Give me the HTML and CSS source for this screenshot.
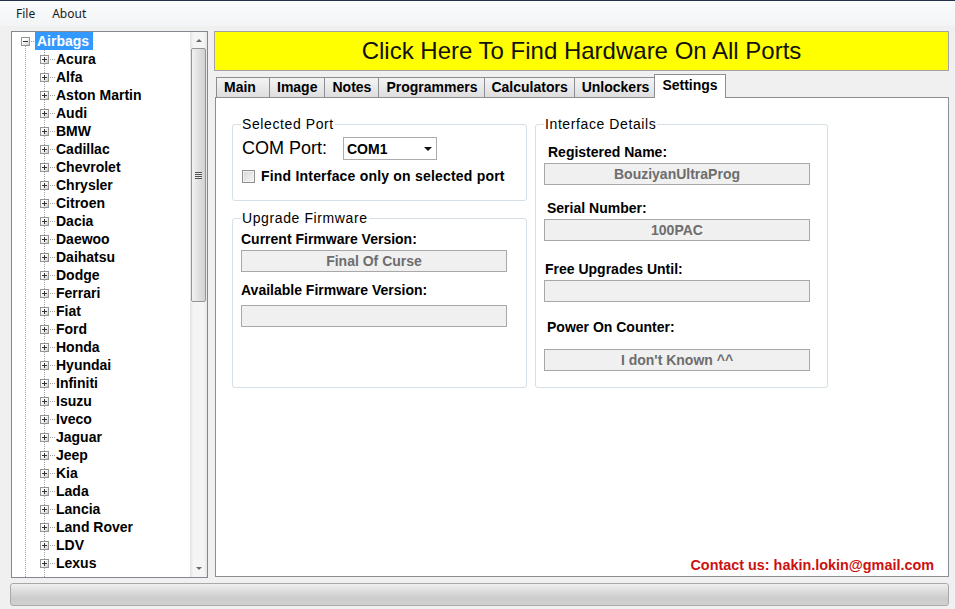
FILE: index.html
```html
<!DOCTYPE html>
<html lang="en">
<head>
  <meta charset="UTF-8">
  <meta name="viewport" content="width=device-width, initial-scale=1.0">
  <title>UltraProg</title>
  <link rel="stylesheet" href="styles.css">
</head>
<body>
  <div class="menubar">
    <span class="menu-item">File</span>
    <span class="menu-item">About</span>
  </div>

  <div class="workspace">
    <!-- car makes tree -->
    <div class="tree">
      <div class="tree-body">
        <div class="node root"><span class="exp open"></span><span class="dots"></span><span class="label selected">Airbags</span></div>
        <ul class="children">
          <li class="node"><span class="exp"></span><span class="dots"></span>Acura</li>
          <li class="node"><span class="exp"></span><span class="dots"></span>Alfa</li>
          <li class="node"><span class="exp"></span><span class="dots"></span>Aston Martin</li>
          <li class="node"><span class="exp"></span><span class="dots"></span>Audi</li>
          <li class="node"><span class="exp"></span><span class="dots"></span>BMW</li>
          <li class="node"><span class="exp"></span><span class="dots"></span>Cadillac</li>
          <li class="node"><span class="exp"></span><span class="dots"></span>Chevrolet</li>
          <li class="node"><span class="exp"></span><span class="dots"></span>Chrysler</li>
          <li class="node"><span class="exp"></span><span class="dots"></span>Citroen</li>
          <li class="node"><span class="exp"></span><span class="dots"></span>Dacia</li>
          <li class="node"><span class="exp"></span><span class="dots"></span>Daewoo</li>
          <li class="node"><span class="exp"></span><span class="dots"></span>Daihatsu</li>
          <li class="node"><span class="exp"></span><span class="dots"></span>Dodge</li>
          <li class="node"><span class="exp"></span><span class="dots"></span>Ferrari</li>
          <li class="node"><span class="exp"></span><span class="dots"></span>Fiat</li>
          <li class="node"><span class="exp"></span><span class="dots"></span>Ford</li>
          <li class="node"><span class="exp"></span><span class="dots"></span>Honda</li>
          <li class="node"><span class="exp"></span><span class="dots"></span>Hyundai</li>
          <li class="node"><span class="exp"></span><span class="dots"></span>Infiniti</li>
          <li class="node"><span class="exp"></span><span class="dots"></span>Isuzu</li>
          <li class="node"><span class="exp"></span><span class="dots"></span>Iveco</li>
          <li class="node"><span class="exp"></span><span class="dots"></span>Jaguar</li>
          <li class="node"><span class="exp"></span><span class="dots"></span>Jeep</li>
          <li class="node"><span class="exp"></span><span class="dots"></span>Kia</li>
          <li class="node"><span class="exp"></span><span class="dots"></span>Lada</li>
          <li class="node"><span class="exp"></span><span class="dots"></span>Lancia</li>
          <li class="node"><span class="exp"></span><span class="dots"></span>Land Rover</li>
          <li class="node"><span class="exp"></span><span class="dots"></span>LDV</li>
          <li class="node"><span class="exp"></span><span class="dots"></span>Lexus</li>
        </ul>
      </div>
      <div class="vscroll">
        <div class="arrow"><span class="tri up"></span></div>
        <div class="track">
          <div class="thumb"><span class="grip"></span></div>
        </div>
        <div class="arrow"><span class="tri down"></span></div>
      </div>
    </div>

    <div class="right">
      <div class="find-btn">Click Here To Find Hardware On All Ports</div>

      <div class="tabs">
        <span class="tab tab-main">Main</span>
        <span class="tab">Image</span>
        <span class="tab">Notes</span>
        <span class="tab">Programmers</span>
        <span class="tab tab-tight">Calculators</span>
        <span class="tab">Unlockers</span>
        <span class="tab active">Settings</span>
      </div>

      <div class="tab-panel">
        <div class="groups">
          <div class="col">
            <div class="group port">
              <div class="group-title">Selected Port</div>
              <div class="com-row">
                <span class="com-label">COM Port:</span>
                <div class="combo"><span>COM1</span><span class="tri down dark"></span></div>
              </div>
              <div class="check-row">
                <span class="checkbox"></span>
                <span>Find Interface only on selected port</span>
              </div>
            </div>

            <div class="group upgrade">
              <div class="group-title">Upgrade Firmware</div>
              <div class="field-label fw-cur">Current Firmware Version:</div>
              <div class="readonly">Final Of Curse</div>
              <div class="field-label fw-avail">Available Firmware Version:</div>
              <div class="readonly fw-box"></div>
            </div>
          </div>

          <div class="group details">
            <div class="group-title">Interface Details</div>
            <div class="field-label reg-name">Registered Name:</div>
            <div class="readonly">BouziyanUltraProg</div>
            <div class="field-label serial">Serial Number:</div>
            <div class="readonly">100PAC</div>
            <div class="field-label upgrades">Free Upgrades Until:</div>
            <div class="readonly"></div>
            <div class="field-label counter">Power On Counter:</div>
            <div class="readonly counter-box">I don't Known ^^</div>
          </div>
        </div>

        <p class="contact">Contact us: hakin.lokin@gmail.com</p>
      </div>
    </div>
  </div>

  <div class="statusbar"></div>
</body>
</html>
```

FILE: styles.css
```css
* {
  box-sizing: border-box;
}
body {
  margin: 0;
  width: 955px;
  height: 609px;
  overflow: hidden;
  background: #f0f0f0;
  font-family: "Liberation Sans", Arial, sans-serif;
  color: #000;
}

/* menu */
.menubar {
  height: 26px;
  border-top: 1px solid #22324a;
  background: linear-gradient(#fafbfc, #f3f4f6);
  display: flex;
  align-items: center;
  padding-left: 16px;
  font-family: "Segoe UI", "Noto Sans", sans-serif;
  font-size: 12px;
  color: #1a1a1a;
}
.menu-item {
  margin-right: 17px;
}

.workspace {
  display: flex;
  gap: 6px;
  padding: 5px 6px 0 11px;
}

/* tree view */
.tree {
  width: 197px;
  height: 547px;
  border: 1px solid #828790;
  background: #fff;
  display: flex;
}
.tree-body {
  flex: 1;
  overflow: hidden;
  background:
    repeating-linear-gradient(#a0a0a0 0 1px, transparent 1px 2px) 13px 14px / 1px 100% no-repeat,
    repeating-linear-gradient(#a0a0a0 0 1px, transparent 1px 2px) 32px 18px / 1px 100% no-repeat;
}
.children {
  list-style: none;
  margin: 0;
  padding: 0;
}
.node {
  display: flex;
  align-items: center;
  height: 18px;
  font-size: 14px;
  font-weight: bold;
  white-space: nowrap;
}
.root {
  padding-left: 9px;
}
.children .node {
  padding-left: 28px;
}
.exp {
  flex: none;
  width: 9px;
  height: 9px;
  border: 1px solid #949494;
  background:
    linear-gradient(#333, #333) center / 5px 1px no-repeat,
    linear-gradient(#333, #333) center / 1px 5px no-repeat,
    linear-gradient(135deg, #fff 35%, #cfcfcf);
}
.exp.open {
  background:
    linear-gradient(#333, #333) center / 5px 1px no-repeat,
    linear-gradient(135deg, #fff 35%, #cfcfcf);
}
.dots {
  flex: none;
  width: 5px;
  height: 1px;
  background: repeating-linear-gradient(to right, transparent 0 1px, #a0a0a0 1px 2px);
}
.children .dots {
  width: 7px;
}
.label.selected {
  height: 18px;
  line-height: 18px;
  padding: 0 4px 0 2px;
  background: #3399ff;
  color: #fff;
}

/* scrollbar */
.vscroll {
  width: 17px;
  display: flex;
  flex-direction: column;
  background: linear-gradient(to right, #e3e3e3, #f5f5f5 20%, #f5f5f5 80%, #e6e6e6);
}
.arrow {
  height: 17px;
  display: flex;
  align-items: center;
  justify-content: center;
}
.tri {
  width: 0;
  height: 0;
  border-left: 3px solid transparent;
  border-right: 3px solid transparent;
}
.tri.up {
  border-bottom: 3px solid #6b6b6b;
}
.tri.down {
  border-top: 3px solid #6b6b6b;
}
.tri.dark {
  border-left-width: 4px;
  border-right-width: 4px;
  border-top: 4px solid #111;
}
.track {
  flex: 1;
}
.thumb {
  height: 254px;
  margin: -1px 1px 0;
  border: 1px solid #959595;
  border-radius: 2px;
  background: linear-gradient(to right, #f2f2f2, #e2e2e2 45%, #d2d2d2);
  display: flex;
  align-items: center;
  justify-content: center;
}
.grip {
  width: 7px;
  height: 7px;
  background: repeating-linear-gradient(#505050 0 1px, #e8e8e8 1px 2px);
}

/* right side */
.right {
  width: 735px;
  display: flex;
  flex-direction: column;
}
.find-btn {
  height: 40px;
  border: 1px solid #a3a3a3;
  background: #ffff00;
  font-size: 24px;
  line-height: 38px;
  text-align: center;
  color: #111;
}

.tabs {
  display: flex;
  align-items: flex-end;
  height: 23px;
  margin-top: 3px;
  padding-left: 2px;
}
.tab {
  height: 20px;
  padding: 0 7px;
  border: 1px solid #8c8e94;
  border-bottom: none;
  margin-right: -1px;
  background: linear-gradient(#f4f4f4, #e9e9e9 50%, #dedede);
  font-size: 14px;
  font-weight: bold;
  line-height: 19px;
}
.tab-main {
  min-width: 54px;
}
.tab-tight {
  padding: 0 6px;
}
.tab.active {
  position: relative;
  z-index: 1;
  height: 24px;
  margin: 0 -2px -1px;
  padding: 0 7px;
  background: #fff;
  line-height: 21px;
}

.tab-panel {
  flex: 1;
  margin: 0 0 1px 1px;
  border: 1px solid #8c8e94;
  background: #fff;
  padding: 26px 14px 3px 16px;
  display: flex;
  flex-direction: column;
}
.groups {
  display: flex;
  gap: 8px;
}
.col {
  display: flex;
  flex-direction: column;
  gap: 17px;
  width: 295px;
}
.group {
  border: 1px solid #d5dfe5;
  border-radius: 3px;
  padding: 0 8px;
}
.group.port {
  height: 77px;
}
.group.upgrade {
  height: 170px;
}
.group.details {
  width: 293px;
  height: 264px;
}
.group-title {
  width: fit-content;
  margin-top: -9px;
  padding: 0 1px;
  background: #fff;
  font-size: 14px;
  line-height: 16px;
  letter-spacing: 0.6px;
}

.com-row {
  display: flex;
  align-items: center;
  height: 23px;
  margin-top: 5px;
}
.com-label {
  width: 102px;
  padding-left: 1px;
  font-size: 18px;
}
.combo {
  width: 94px;
  height: 23px;
  border: 1px solid #acacac;
  display: flex;
  align-items: center;
  justify-content: space-between;
  padding: 0 4px 0 3px;
  font-size: 14px;
  font-weight: bold;
}
.check-row {
  display: flex;
  align-items: center;
  gap: 6px;
  height: 16px;
  margin-top: 8px;
  font-size: 14px;
  font-weight: bold;
  letter-spacing: 0.2px;
}
.checkbox {
  width: 13px;
  height: 13px;
  margin-left: 1px;
  border: 1px solid #8f8f8f;
  background: linear-gradient(135deg, #d6d6d6, #f6f6f6);
  box-shadow: inset 0 0 0 1px #f2f2f2;
}

.field-label {
  font-size: 14px;
  font-weight: bold;
  line-height: 16px;
}
.readonly {
  width: 266px;
  height: 22px;
  margin-top: 3px;
  border: 1px solid #a8a8a8;
  background: #f0f0f0;
  color: #6d6d6d;
  font-size: 14px;
  font-weight: bold;
  line-height: 20px;
  text-align: center;
}
.fw-cur {
  margin-top: 5px;
}
.fw-avail {
  margin-top: 10px;
}
.fw-box {
  margin-top: 7px;
}
.reg-name {
  margin-top: 12px;
  padding-left: 4px;
}
.serial {
  margin-top: 15px;
  padding-left: 3px;
}
.upgrades {
  margin-top: 20px;
  padding-left: 1px;
}
.counter {
  margin-top: 17px;
  padding-left: 3px;
}
.counter-box {
  margin-top: 14px;
}

.contact {
  margin: auto 0 0;
  align-self: flex-end;
  color: #cc1111;
  font-size: 14.4px;
  font-weight: bold;
  line-height: 16px;
}

.statusbar {
  height: 23px;
  margin: 5px 6px 0 10px;
  border: 1px solid #a9a9a9;
  border-radius: 3px;
  background: linear-gradient(#f0f0f0, #dcdcdc 35%, #cbcbcb 70%, #d2d2d2);
}
```
